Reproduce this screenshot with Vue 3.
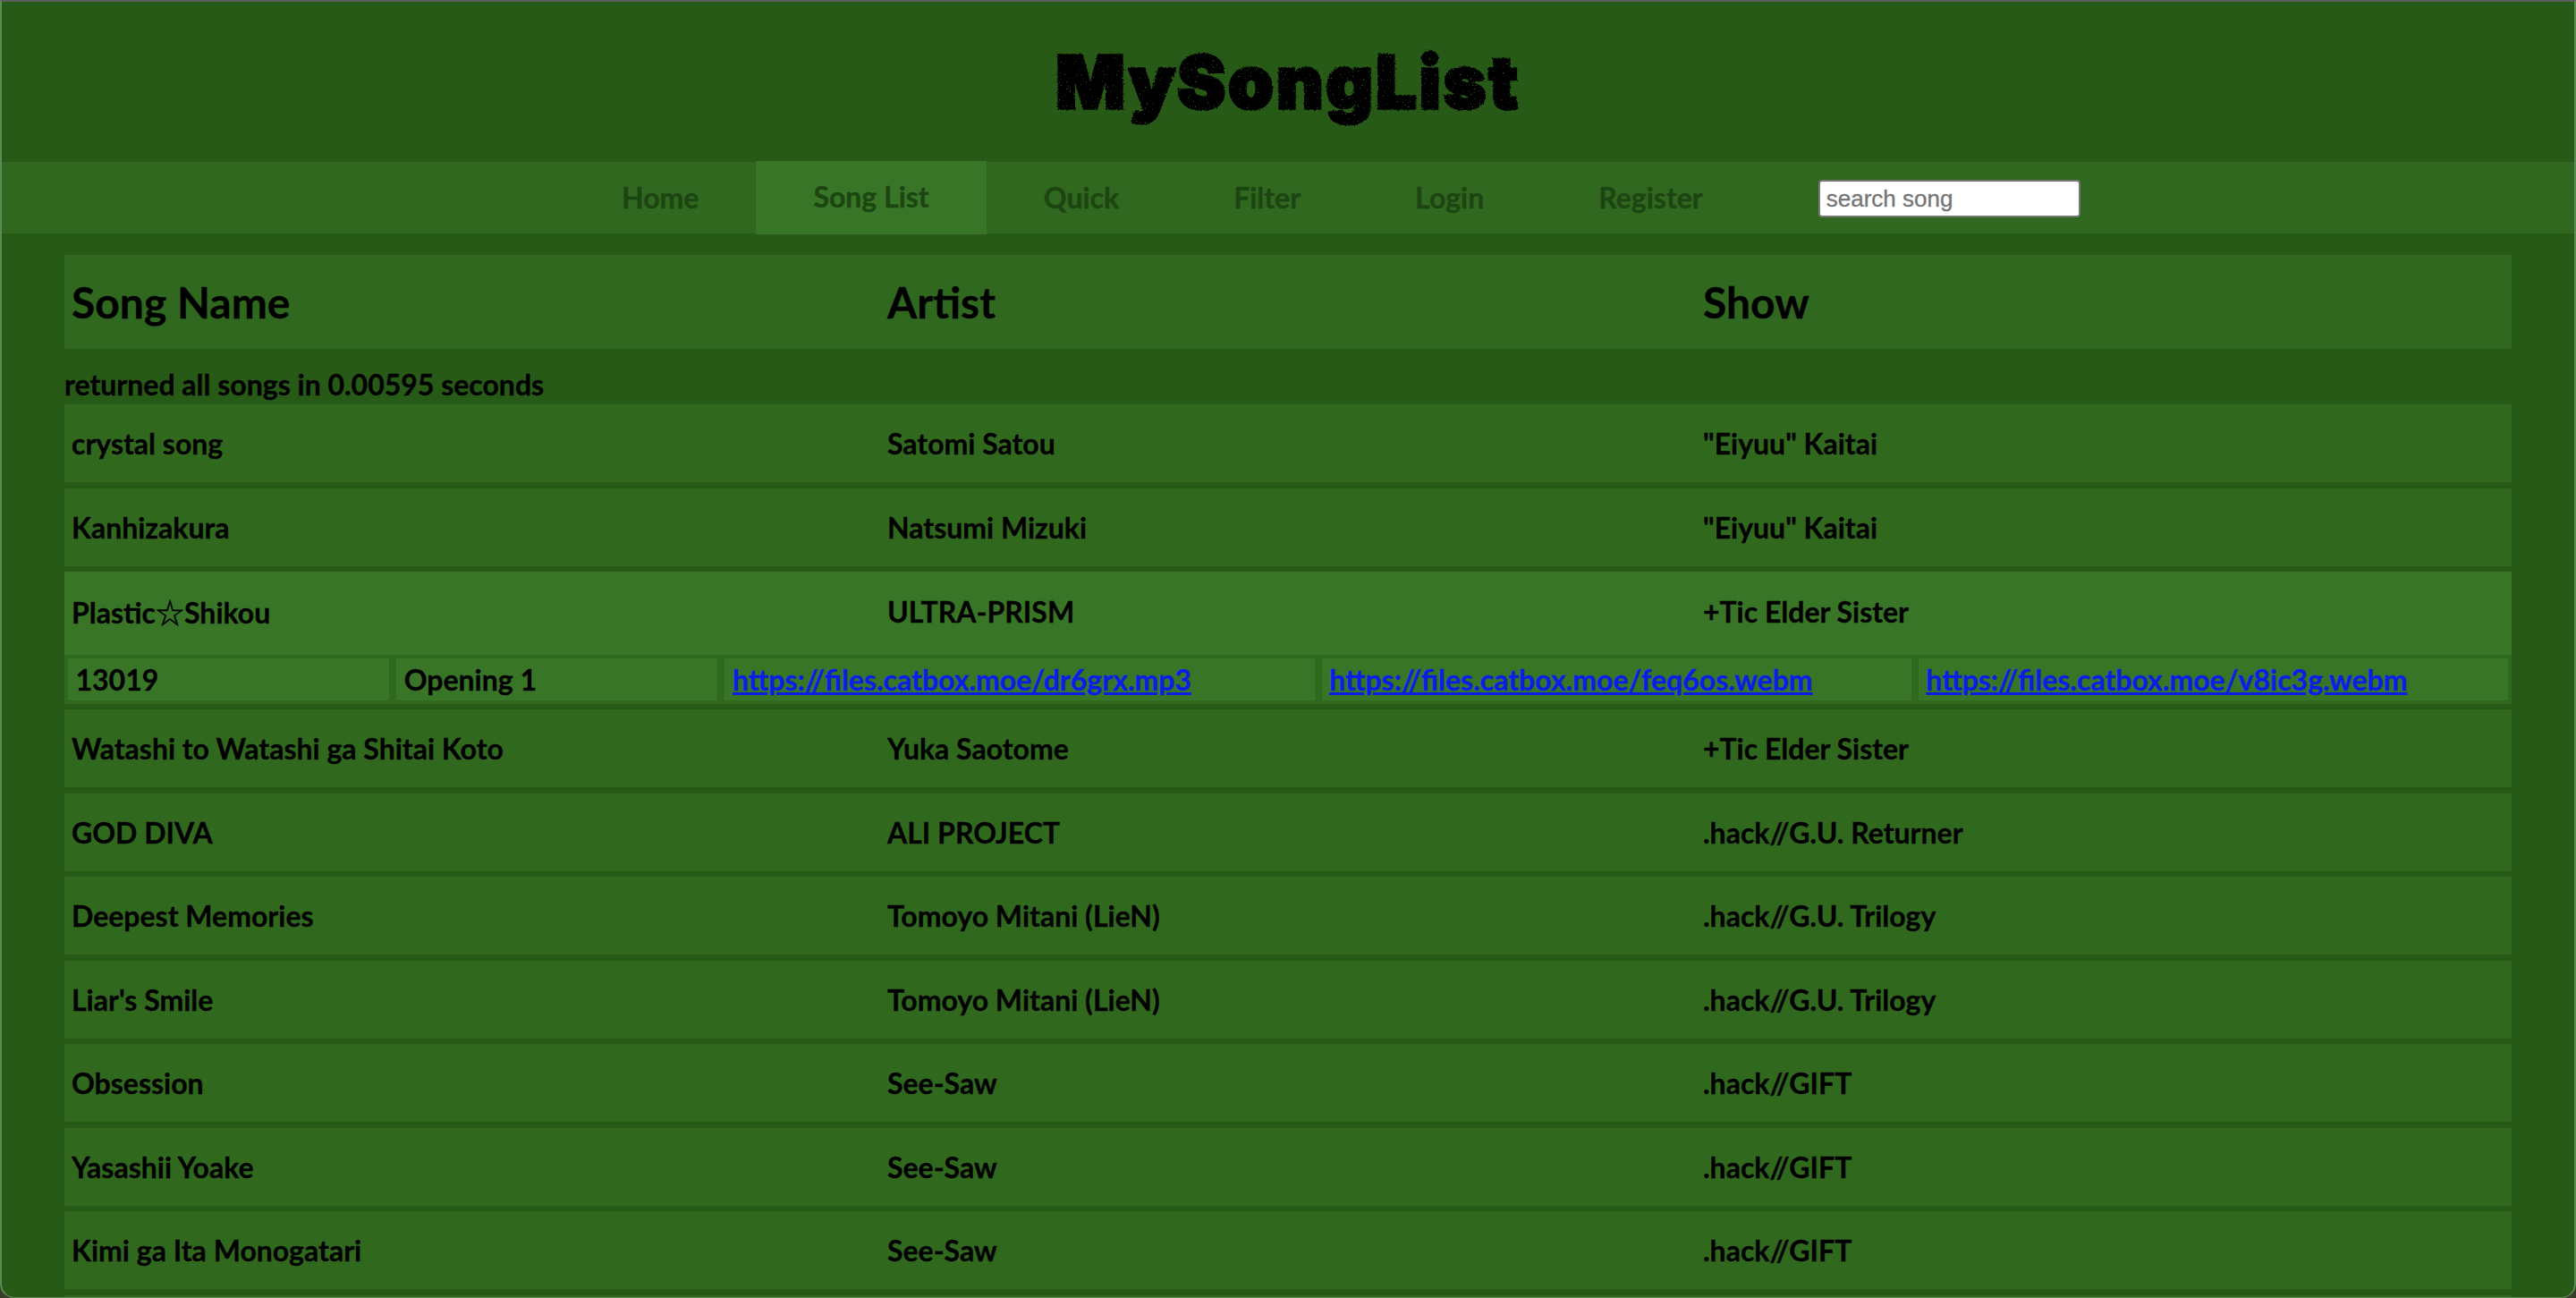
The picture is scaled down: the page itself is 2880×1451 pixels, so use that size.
<script setup>
const navItems = [
  { label: 'Home' },
  { label: 'Song List', active: true },
  { label: 'Quick' },
  { label: 'Filter' },
  { label: 'Login' },
  { label: 'Register' },
]

const songsBefore = [
  { name: 'crystal song', artist: 'Satomi Satou', show: '"Eiyuu" Kaitai' },
  { name: 'Kanhizakura', artist: 'Natsumi Mizuki', show: '"Eiyuu" Kaitai' },
]

const openSong = { name: 'Plastic☆Shikou', artist: 'ULTRA-PRISM', show: '+Tic Elder Sister' }
const openLinks = [
  'https://files.catbox.moe/dr6grx.mp3',
  'https://files.catbox.moe/feq6os.webm',
  'https://files.catbox.moe/v8ic3g.webm',
]

const songsAfter = [
  { name: 'Watashi to Watashi ga Shitai Koto', artist: 'Yuka Saotome', show: '+Tic Elder Sister' },
  { name: 'GOD DIVA', artist: 'ALI PROJECT', show: '.hack//G.U. Returner' },
  { name: 'Deepest Memories', artist: 'Tomoyo Mitani (LieN)', show: '.hack//G.U. Trilogy' },
  { name: "Liar's Smile", artist: 'Tomoyo Mitani (LieN)', show: '.hack//G.U. Trilogy' },
  { name: 'Obsession', artist: 'See-Saw', show: '.hack//GIFT' },
  { name: 'Yasashii Yoake', artist: 'See-Saw', show: '.hack//GIFT' },
  { name: 'Kimi ga Ita Monogatari', artist: 'See-Saw', show: '.hack//GIFT' },
]
</script>

<template>
  <div class="window">
    <!-- speckled look of the title -->
    <svg class="defs" width="0" height="0">
      <filter id="speckle" x="0" y="0" width="100%" height="100%">
        <feTurbulence type="fractalNoise" baseFrequency="0.5" numOctaves="1" seed="7" result="noise" />
        <feDisplacementMap in="SourceGraphic" in2="noise" scale="3" result="rough" />
        <feColorMatrix in="noise" type="matrix" values="0 0 0 0 0  0 0 0 0 0  0 0 0 0 0  14 0 0 0 -9.6" result="dots" />
        <feComposite in="rough" in2="dots" operator="out" />
      </filter>
    </svg>

    <header class="top">
      <h1 class="logo">MySongList</h1>
    </header>

    <nav class="nav">
      <a v-for="item in navItems" :key="item.label" class="nav-item" :class="{ active: item.active }">{{ item.label }}</a>
      <input class="search" type="text" placeholder="search song" />
    </nav>

    <main class="list">
      <div class="row head">
        <div class="cell">Song Name</div>
        <div class="cell">Artist</div>
        <div class="cell">Show</div>
      </div>
      <p class="status">returned all songs in 0.00595 seconds</p>

      <div v-for="song in songsBefore" :key="song.name" class="row song">
        <div class="cell">{{ song.name }}</div>
        <div class="cell">{{ song.artist }}</div>
        <div class="cell">{{ song.show }}</div>
      </div>

      <div class="open">
        <div class="row open-main">
          <div class="cell">{{ openSong.name }}</div>
          <div class="cell">{{ openSong.artist }}</div>
          <div class="cell">{{ openSong.show }}</div>
        </div>
        <div class="links">
          <div class="link-cell">13019</div>
          <div class="link-cell">Opening 1</div>
          <div v-for="link in openLinks" :key="link" class="link-cell">
            <a :href="link">{{ link }}</a>
          </div>
        </div>
      </div>

      <div v-for="song in songsAfter" :key="song.name" class="row song">
        <div class="cell">{{ song.name }}</div>
        <div class="cell">{{ song.artist }}</div>
        <div class="cell">{{ song.show }}</div>
      </div>
      <!-- next row just peeks in at the bottom -->
      <div class="row song"></div>
    </main>
  </div>
</template>

<style>
html,
body {
  margin: 0;
  height: 100%;
  overflow: hidden;
  background: #3a3d2a;
}
</style>

<style scoped>
.window {
  box-sizing: border-box;
  height: 1451px;
  overflow: hidden;
  background: #275917;
  border-top: 2px solid #5d5d5d;
  border-left: 2px solid #5f8a55;
  border-right: 2px solid #5f8a55;
  border-bottom: 1px solid #5f8a55;
  border-radius: 0 0 16px 16px;
  font-family: Lato, 'Noto Sans CJK JP', sans-serif;
  font-weight: 700;
  color: #000;
  -webkit-text-stroke: 0.3px currentColor;
}

.defs {
  position: absolute;
}

.top {
  height: 179px;
  display: flex;
  justify-content: center;
  align-items: center;
}

.logo {
  margin: 0;
  font-family: Inter, sans-serif;
  font-size: 81px;
  font-weight: 900;
  -webkit-text-stroke: 3.5px #000;
  letter-spacing: 3px;
  filter: url(#speckle);
}

.nav {
  height: 80px;
  background: #2f681e;
  display: flex;
  padding-left: 629px;
}

.nav-item {
  padding: 0 64px;
  font-size: 32px;
  line-height: 80px;
  color: #1c4512;
}

.nav-item.active {
  height: 82px;
  margin-top: -1px;
  background: #387526;
}

.search {
  box-sizing: border-box;
  width: 293px;
  height: 42px;
  margin: 20px 0 0 65px;
  padding: 0 7px;
  border: 2px solid #767676;
  border-radius: 4px;
  background: #fff;
  font-family: 'Liberation Sans', sans-serif;
  font-size: 26px;
}

.list {
  padding: 24px 70px 0;
}

.row {
  display: grid;
  grid-template-columns: repeat(3, 1fr);
  background: #30691e;
}

.cell {
  padding: 0 8px;
}

.head {
  height: 105px;
  align-items: center;
  font-size: 48px;
  background: #2f681e;
}

.status {
  margin: 0;
  height: 62px;
  font-size: 32px;
  line-height: 80px;
}

.song {
  height: 87px;
  margin-bottom: 6.5px;
  align-items: center;
  font-size: 32px;
}

.open {
  margin-bottom: 6px;
  font-size: 32px;
  background: #30691e;
}

.open-main {
  height: 93px;
  align-items: center;
  background: #387526;
}

.open-main .cell {
  margin-bottom: 4px;
}

.open-main .cell:first-child {
  margin-bottom: 6px;
}

.links {
  display: grid;
  grid-template-columns: 1fr 1fr 1.835fr 1.835fr 1.835fr;
  gap: 8px;
  padding: 4px;
}

.link-cell {
  height: 47px;
  padding: 0 8.5px;
  line-height: 47px;
  background: #387526;
  white-space: nowrap;
}

.link-cell a {
  color: #0a1ee6;
  text-decoration-thickness: 3px;
}
</style>
